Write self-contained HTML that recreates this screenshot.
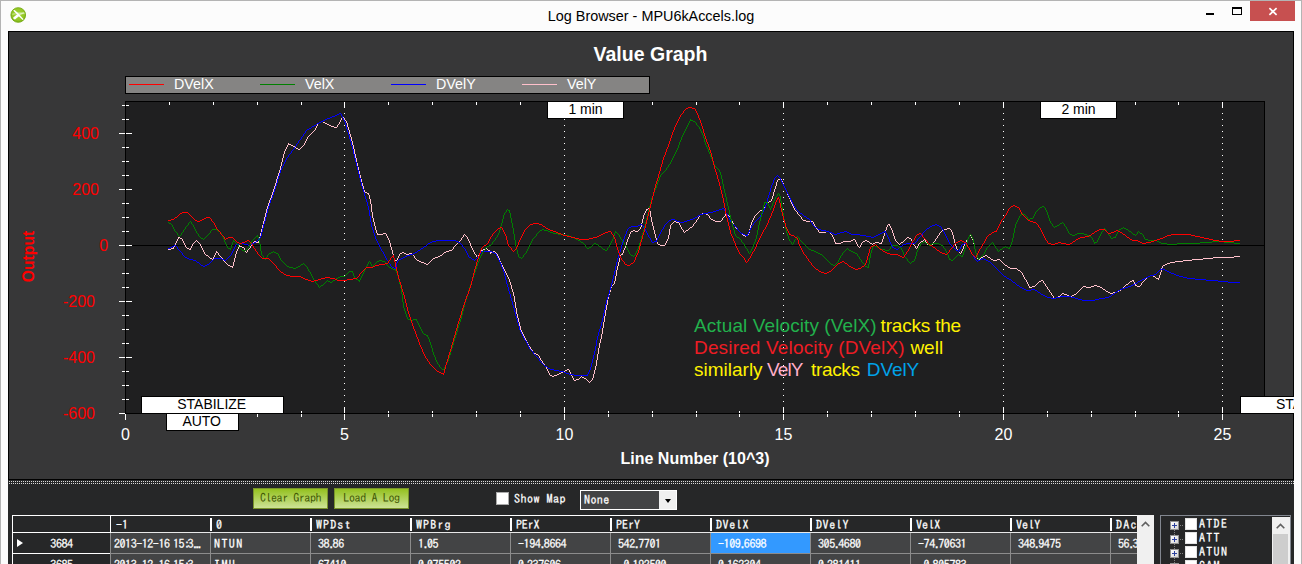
<!DOCTYPE html>
<html><head><meta charset="utf-8"><title>Log Browser - MPU6kAccels.log</title>
<style>
html,body{margin:0;padding:0}
body{width:1302px;height:564px;overflow:hidden;background:#fcfcfc;position:relative;font-family:"Liberation Sans",sans-serif}
.abs{position:absolute}
#win{position:absolute;left:0;top:0;width:1300px;height:564px;border:1px solid #b4b4b4;border-bottom:none}
#title{position:absolute;left:0;top:7px;width:1302px;text-align:center;font-size:14.4px;color:#000;line-height:18px}
#gp{position:absolute;left:8px;top:31px;width:1284px;height:447px;border:1px solid #000;background:#373738}
#svg{position:absolute;left:0;top:0}
#svg text{font-family:"Liberation Sans",sans-serif}
#bp{position:absolute;left:8px;top:480px;width:1286px;height:84px;background:#262728;overflow:hidden;font-family:"IPAGothic","Liberation Sans",sans-serif;font-size:12px;color:#fff;-webkit-text-stroke:0.25px #fff}
#bp i{font-style:normal;letter-spacing:-2.6px}
#bp u{text-decoration:none;letter-spacing:-3.7px}
.n{letter-spacing:-0.4px}
.dots{position:absolute;left:1px;width:1285px;height:1px;background:repeating-linear-gradient(90deg,#d9d9d9 0,#d9d9d9 1px,#262728 1px,#262728 2px)}
.btn{position:absolute;top:8px;height:19px;width:73px;border:1px solid #79942a;background:linear-gradient(#94c11f,#cde296);color:#405704;-webkit-text-stroke:0;text-align:center;line-height:17px;font-size:12px;white-space:nowrap}
#tbl{position:absolute;left:4px;top:35px;width:1141px;height:60px;overflow:hidden;background:#262728}
#tbl .top{position:absolute;left:0;top:0;width:1125px;height:1px;background:#fff}
#tbl .lft{position:absolute;left:0;top:0;width:1px;height:60px;background:#fff}
#grid{position:absolute;left:1px;top:1px;width:1124px;height:59px;overflow:hidden}
.hc{position:absolute;top:0;height:16px;width:95px;padding-left:5px;border-bottom:1px solid #e8e8e8;line-height:17px;white-space:nowrap}
.hc:before{content:"";position:absolute;left:-1px;top:2px;width:2px;height:13px;background:#fff}
.hc0:before{left:-1px;top:0;width:1px;height:17px}
.rh{position:absolute;left:0;width:97px;height:20px;box-shadow:1px 0 0 #8c8c8c;border-bottom:1px solid #fff;background:#262728;line-height:21px;text-align:center}
.tri{position:absolute;left:4px;top:6px;width:0;height:0;border:4.5px solid transparent;border-left:6px solid #fff;border-right:none}
.c{position:absolute;box-sizing:border-box;width:100px;height:21px;border-right:1px solid #8c8c8c;border-bottom:1px solid #8c8c8c;background:#434445;line-height:21px;white-space:nowrap;overflow:hidden}
.sel{background:#3399ff}
#vs{position:absolute;left:1129px;top:35px;width:17px;height:60px;background:#f0f0f0}
.chev{position:absolute;width:9px;height:6px}
#tv{position:absolute;left:1152px;top:35px;width:129px;height:60px;border:1px solid #828790;border-bottom:none;background:#262728;overflow:hidden}
#tvs{position:absolute;left:1264px;top:37px;width:18px;height:50px;background:#f0f0f0}
#tvs .th{position:absolute;left:1px;top:17px;width:15px;height:40px;background:#cdcdcd}
.pm{position:absolute;left:1162px;width:7px;height:7px;border:1px solid #919191;background:linear-gradient(135deg,#fff,#d6d6d6)}
.pm:before{content:"";position:absolute;left:1px;top:3px;width:5px;height:1px;background:#2a3f9e}
.pm:after{content:"";position:absolute;left:3px;top:1px;width:1px;height:5px;background:#2a3f9e}
.hd{position:absolute;left:1172px;width:4px;height:1px;background:repeating-linear-gradient(90deg,#808080 0,#808080 1px,transparent 1px,transparent 2px)}
.vd{position:absolute;left:1166px;width:1px;height:5px;background:repeating-linear-gradient(#808080 0,#808080 1px,transparent 1px,transparent 2px)}
.cb{position:absolute;left:1177px;width:10px;height:10px;border:1px solid #e3e3e3;background:#fff}
.tl{position:absolute;left:1191px;line-height:15px;letter-spacing:1.3px}
</style></head><body>
<div id="win"></div>
<svg class="abs" style="left:10px;top:7px" width="17" height="17" viewBox="0 0 17 17"><defs><radialGradient id="ig" cx="0.5" cy="0.45" r="0.55"><stop offset="0" stop-color="#a4d43a"/><stop offset="0.75" stop-color="#93c724"/><stop offset="1" stop-color="#74ab12"/></radialGradient></defs><circle cx="8.25" cy="8" r="7.35" fill="url(#ig)" stroke="#78ad16" stroke-width="0.9"/><path d="M2.3 6.6Q8 4.2 14.6 5.6L14.9 7.2Q8 6.6 2.1 8.2z" fill="#c3e486" opacity="0.75"/><path d="M3.2 3.4L4.6 2.9L8.6 6.6L10.2 8.6L13.6 12.2L12.6 13L9 9.6L7 7.6z" fill="#fff"/><path d="M3.2 10.6L7.2 7.2L9.6 8.8L5 12.6L3.6 12z" fill="#fff"/><path d="M8.6 6.8L13.8 5.2L14.4 6.2L9.6 8.6z" fill="#fff" opacity="0.55"/></svg>
<div id="title">Log Browser - MPU6kAccels.log</div>
<div class="abs" style="left:1206px;top:13px;width:8px;height:2px;background:#000"></div>
<div class="abs" style="left:1232px;top:7px;width:8px;height:5px;border:1px solid #000;border-top-width:2px"></div>
<div class="abs" style="left:1250px;top:1px;width:45px;height:20px;background:#c75050"></div>
<svg class="abs" style="left:1250px;top:1px" width="45" height="20"><path d="M19.4 7.2L26.6 13.8M26.6 7.2L19.4 13.8" stroke="#fff" stroke-width="1.7" fill="none"/></svg>
<div id="gp"></div>
<div id="bp">
 <div class="dots" style="top:1px"></div><div class="dots" style="top:3px"></div>
 <div class="btn" style="left:245px;letter-spacing:-0.45px">Clear Graph</div>
 <div class="btn" style="left:326px;letter-spacing:-0.35px">Load A Log</div>
 <div class="abs" style="left:488px;top:12px;width:11px;height:11px;background:#fff;border:1px solid #a9a9a9"></div>
 <div class="abs" style="left:506px;top:11px;line-height:14px;letter-spacing:0.5px">Show Map</div>
 <div class="abs" style="left:572px;top:10px;width:95px;height:18px;border:1px solid #fff;background:#434445"><span style="position:absolute;left:3px;top:1px;line-height:14px;letter-spacing:0.4px">None</span><div class="abs" style="right:0;top:0;width:17px;height:18px;background:#f0f0f0"></div><div class="abs" style="right:5px;top:8px;width:0;height:0;border:3.5px solid transparent;border-top:4px solid #000;border-bottom:none"></div></div>
 <div id="tbl">
  <div id="grid">
  <div class="rh" style="top:0;height:16px;border-right-color:#262728"></div>
  <div class="hc hc0" style="left:98px;letter-spacing:0px">-1</div><div class="hc" style="left:198px;letter-spacing:0px">0</div><div class="hc" style="left:298px;letter-spacing:1.1px">WPDst</div><div class="hc" style="left:398px;letter-spacing:1.1px">WPBrg</div><div class="hc" style="left:498px;letter-spacing:-0.2px">PErX</div><div class="hc" style="left:598px;letter-spacing:0.0px">PErY</div><div class="hc" style="left:698px;letter-spacing:0.6px">DVelX</div><div class="hc" style="left:798px;letter-spacing:0.6px">DVelY</div><div class="hc" style="left:898px;letter-spacing:0.1px">VelX</div><div class="hc" style="left:998px;letter-spacing:0.1px">VelY</div><div class="hc" style="left:1098px;letter-spacing:1.2px">DAcX</div>
  <div class="rh" style="top:17px"><b class="tri"></b><span class="n">3684</span></div><div class="c" style="left:98px;top:17px;padding-left:3px"><span class="n" style="letter-spacing:-0.45px">2013-12-16<i> </i>15<i>:</i>3<u>...</u></span></div><div class="c" style="left:198px;top:17px;padding-left:3px"><span style="letter-spacing:1.4px">NTUN</span></div><div class="c" style="left:298px;top:17px;padding-left:7px"><span class="n">38<i>.</i>86</span></div><div class="c" style="left:398px;top:17px;padding-left:7px"><span class="n">1<i>.</i>05</span></div><div class="c" style="left:498px;top:17px;padding-left:7px"><span class="n">-194<i>.</i>8664</span></div><div class="c" style="left:598px;top:17px;padding-left:7px"><span class="n">542<i>.</i>7701</span></div><div class="c sel" style="left:698px;top:17px;padding-left:7px"><span class="n">-109<i>.</i>6698</span></div><div class="c" style="left:798px;top:17px;padding-left:7px"><span class="n">305<i>.</i>4680</span></div><div class="c" style="left:898px;top:17px;padding-left:7px"><span class="n">-74<i>.</i>70631</span></div><div class="c" style="left:998px;top:17px;padding-left:7px"><span class="n">348<i>.</i>9475</span></div><div class="c" style="left:1098px;top:17px;padding-left:7px"><span class="n">56<i>.</i>37</span></div>
  <div class="rh" style="top:38px"><span class="n">3685</span></div><div class="c" style="left:98px;top:38px;padding-left:3px"><span class="n" style="letter-spacing:-0.45px">2013-12-16<i> </i>15<i>:</i>3<u>...</u></span></div><div class="c" style="left:198px;top:38px;padding-left:3px"><span style="letter-spacing:1.4px">IMU</span></div><div class="c" style="left:298px;top:38px;padding-left:7px"><span class="n">67410</span></div><div class="c" style="left:398px;top:38px;padding-left:7px"><span class="n">0<i>.</i>075502</span></div><div class="c" style="left:498px;top:38px;padding-left:7px"><span class="n">0<i>.</i>237606</span></div><div class="c" style="left:598px;top:38px;padding-left:7px"><span class="n">-0<i>.</i>192500</span></div><div class="c" style="left:698px;top:38px;padding-left:7px"><span class="n">0<i>.</i>162304</span></div><div class="c" style="left:798px;top:38px;padding-left:7px"><span class="n">0<i>.</i>281411</span></div><div class="c" style="left:898px;top:38px;padding-left:7px"><span class="n">-0<i>.</i>805783</span></div><div class="c" style="left:998px;top:38px;padding-left:7px"><span class="n"></span></div><div class="c" style="left:1098px;top:38px;padding-left:7px"><span class="n"></span></div>
  </div>
  <div class="top"></div><div class="lft"></div>
 </div>
 <div id="vs"><svg class="chev" style="left:4px;top:6px" viewBox="0 0 9 6"><path d="M0.7 5.3L4.5 1.5L8.3 5.3" fill="none" stroke="#606060" stroke-width="1.6"/></svg></div>
 <div id="tv"></div>
 <div class="pm" style="top:41px"></div><div class="hd" style="top:45px"></div><div class="vd" style="top:50px"></div><div class="cb" style="top:38px"></div><div class="tl" style="top:36px">ATDE</div><div class="pm" style="top:55px"></div><div class="hd" style="top:59px"></div><div class="vd" style="top:64px"></div><div class="cb" style="top:52px"></div><div class="tl" style="top:50px">ATT</div><div class="pm" style="top:69px"></div><div class="hd" style="top:73px"></div><div class="vd" style="top:78px"></div><div class="cb" style="top:66px"></div><div class="tl" style="top:64px">ATUN</div><div class="pm" style="top:83px"></div><div class="hd" style="top:87px"></div><div class="vd" style="top:92px"></div><div class="cb" style="top:80px"></div><div class="tl" style="top:78px">CAM</div>
 <div id="tvs"><div class="th"></div><svg class="chev" style="left:4px;top:6px" viewBox="0 0 9 6"><path d="M0.7 5.3L4.5 1.5L8.3 5.3" fill="none" stroke="#606060" stroke-width="1.6"/></svg></div>
</div>
<svg id="svg" width="1294" height="564" viewBox="0 0 1294 564">
<rect x="125.5" y="101.5" width="1139" height="312" fill="#1f1f20" stroke="none"/>
<line x1="344.5" y1="101" x2="344.5" y2="413" stroke="#fff" stroke-width="1" stroke-dasharray="1 5"/>
<line x1="564.5" y1="101" x2="564.5" y2="413" stroke="#fff" stroke-width="1" stroke-dasharray="1 5"/>
<line x1="783.5" y1="101" x2="783.5" y2="413" stroke="#fff" stroke-width="1" stroke-dasharray="1 5"/>
<line x1="1003.5" y1="101" x2="1003.5" y2="413" stroke="#fff" stroke-width="1" stroke-dasharray="1 5"/>
<line x1="1222.5" y1="101" x2="1222.5" y2="413" stroke="#fff" stroke-width="1" stroke-dasharray="1 5"/>
<line x1="126" y1="245.5" x2="1264" y2="245.5" stroke="#000" stroke-width="1"/>
<g fill="none" stroke-width="1" shape-rendering="crispEdges">
<path stroke="#ffc0cb" d="M173.5 247v2M174.5 245v2M175.5 243v2M176.5 241v2M177.5 239v2M178.5 237v2M182.5 239v2M183.5 241v2M184.5 243v2M185.5 245v2M190.5 248v2M191.5 246v2M192.5 244v2M200.5 244v2M201.5 246v2M202.5 248v2M203.5 250v2M204.5 252v2M213.5 257v2M214.5 255v2M215.5 253v2M216.5 251v2M218.5 253v2M222.5 258v2M232.5 266v2M233.5 262v4M234.5 258v4M235.5 254v4M236.5 251v3M237.5 249v2M238.5 247v2M239.5 245v2M244.5 248v2M245.5 250v2M247.5 250v2M250.5 246v2M253.5 242v2M258.5 241v2M259.5 237v4M260.5 233v4M261.5 229v4M262.5 225v4M263.5 221v4M264.5 217v4M265.5 213v4M266.5 209v4M267.5 206v3M268.5 203v3M269.5 200v3M270.5 198v2M271.5 195v3M272.5 192v3M273.5 189v3M274.5 186v3M275.5 183v3M276.5 179v4M277.5 176v3M278.5 173v3M279.5 170v3M280.5 166v4M281.5 162v4M282.5 158v4M283.5 154v4M284.5 151v3M285.5 149v2M286.5 147v2M287.5 145v2M288.5 143v2M304.5 143v2M305.5 141v2M306.5 139v2M307.5 137v2M315.5 128v2M316.5 126v2M317.5 124v2M337.5 125v2M339.5 122v2M340.5 120v2M341.5 118v2M342.5 116v2M344.5 118v2M346.5 121v2M347.5 123v4M348.5 127v3M349.5 130v4M350.5 134v3M351.5 137v4M352.5 141v4M353.5 145v4M354.5 149v5M355.5 154v4M356.5 158v5M357.5 163v4M358.5 167v4M359.5 171v4M360.5 175v4M361.5 179v4M362.5 183v3M363.5 186v4M364.5 190v2M368.5 193v2M369.5 195v4M370.5 199v5M371.5 204v8M372.5 212v6M373.5 218v4M374.5 222v4M375.5 226v4M376.5 230v3M377.5 233v2M386.5 234v2M387.5 236v2M388.5 238v2M389.5 240v3M390.5 243v4M391.5 247v3M392.5 250v4M393.5 254v4M394.5 258v2M397.5 258v2M398.5 256v2M399.5 254v2M414.5 256v2M453.5 247v2M461.5 238v2M463.5 235v2M467.5 237v2M468.5 239v2M469.5 241v2M470.5 243v3M471.5 246v2M472.5 248v2M473.5 250v2M474.5 252v2M476.5 255v2M478.5 255v2M479.5 253v2M480.5 251v2M490.5 251v3M497.5 254v2M498.5 256v2M499.5 258v3M500.5 261v2M501.5 263v2M502.5 265v2M503.5 267v2M504.5 269v2M505.5 271v2M506.5 273v2M507.5 275v2M508.5 277v2M509.5 279v3M510.5 282v3M511.5 285v4M512.5 289v3M513.5 292v4M514.5 296v6M515.5 302v6M516.5 308v6M517.5 314v4M518.5 318v4M519.5 322v4M520.5 326v4M521.5 330v2M522.5 332v2M523.5 334v2M524.5 336v2M525.5 338v2M526.5 340v2M527.5 342v2M528.5 344v2M530.5 347v2M532.5 350v2M539.5 356v2M540.5 358v2M542.5 361v2M544.5 364v2M546.5 367v2M547.5 369v2M548.5 371v2M549.5 373v2M569.5 370v2M570.5 372v2M571.5 374v2M572.5 376v2M573.5 378v2M592.5 378v2M593.5 374v4M594.5 370v4M595.5 366v4M596.5 360v6M597.5 354v6M598.5 348v6M599.5 343v5M600.5 339v4M601.5 334v5M602.5 328v6M603.5 322v6M604.5 316v6M605.5 310v6M606.5 305v5M607.5 299v6M608.5 295v4M609.5 292v3M610.5 288v4M611.5 286v2M614.5 281v3M615.5 276v5M616.5 270v6M617.5 266v4M618.5 262v4M619.5 258v4M620.5 255v3M622.5 253v2M623.5 250v3M624.5 248v2M625.5 245v3M626.5 242v3M627.5 239v3M628.5 237v2M629.5 234v3M630.5 232v2M640.5 227v2M641.5 223v4M642.5 219v4M643.5 215v4M644.5 213v2M645.5 211v2M646.5 209v2M649.5 208v3M650.5 211v6M651.5 217v5M652.5 222v4M653.5 226v4M654.5 230v4M655.5 234v4M656.5 238v4M657.5 242v2M665.5 243v2M666.5 241v2M667.5 239v2M668.5 235v4M669.5 229v6M670.5 225v4M679.5 223v2M680.5 225v2M681.5 227v2M683.5 230v2M693.5 224v2M696.5 220v2M698.5 217v2M699.5 215v2M709.5 216v2M722.5 218v2M725.5 214v2M730.5 217v2M731.5 219v2M732.5 221v2M733.5 223v2M735.5 226v2M748.5 233v2M749.5 229v4M750.5 225v4M751.5 222v3M752.5 220v2M753.5 218v2M754.5 216v2M765.5 205v2M771.5 199v2M772.5 196v3M773.5 192v4M774.5 189v3M775.5 186v3M776.5 182v4M777.5 180v2M781.5 179v2M782.5 181v2M783.5 183v3M784.5 186v2M785.5 188v2M786.5 190v2M787.5 192v3M788.5 195v2M789.5 197v2M790.5 199v3M791.5 202v2M792.5 204v2M793.5 206v2M794.5 208v2M797.5 212v2M801.5 217v2M813.5 222v2M814.5 224v2M815.5 226v2M818.5 230v2M832.5 235v2M833.5 237v2M834.5 239v3M835.5 242v2M855.5 240v2M856.5 242v2M857.5 244v2M860.5 245v2M861.5 243v2M881.5 242v2M882.5 239v3M883.5 236v3M884.5 233v3M885.5 230v3M886.5 227v3M887.5 225v2M889.5 224v2M890.5 226v2M891.5 228v2M892.5 230v3M893.5 233v3M894.5 236v3M895.5 239v2M911.5 239v2M912.5 241v2M913.5 243v2M915.5 246v2M917.5 246v2M918.5 244v2M925.5 240v2M926.5 242v2M933.5 242v2M935.5 239v2M937.5 236v2M939.5 233v2M951.5 230v2M952.5 232v3M953.5 235v4M954.5 239v4M955.5 243v3M956.5 246v3M957.5 249v2M961.5 251v2M962.5 249v2M963.5 246v3M964.5 244v2M965.5 242v2M966.5 240v2M968.5 237v2M971.5 236v2M972.5 238v2M973.5 240v4M974.5 244v5M975.5 249v4M976.5 253v3M977.5 256v3M978.5 259v2M1022.5 273v2M1023.5 275v2M1024.5 277v2M1026.5 280v2M1027.5 282v2M1028.5 284v2M1029.5 286v2M1043.5 281v2M1045.5 284v2M1047.5 287v2M1049.5 290v2M1051.5 293v2M1053.5 296v2M1133.5 280v2M1134.5 282v2M1135.5 284v2M1141.5 283v2M1158.5 278v2M1159.5 275v3M1160.5 272v3M1161.5 268v4M1162.5 266v2M343 117.5h1M345 120.5h1M321 121.5h2M319 122.5h2M323 122.5h2M318 123.5h1M325 123.5h2M327 124.5h2M338 124.5h1M329 125.5h2M331 126.5h3M334 127.5h3M314 130.5h1M313 131.5h1M312 132.5h1M311 133.5h1M310 134.5h1M309 135.5h1M308 136.5h1M289 144.5h2M291 145.5h2M303 145.5h1M293 146.5h2M302 146.5h1M295 147.5h1M301 147.5h1M296 148.5h2M300 148.5h1M298 149.5h2M780 178.5h1M778 179.5h2M365 192.5h2M367 193.5h1M769 201.5h2M768 202.5h1M767 203.5h1M766 204.5h1M764 207.5h1M648 208.5h1M763 208.5h1M647 209.5h1M762 209.5h1M760 210.5h2M795 210.5h1M759 211.5h1M796 211.5h1M758 212.5h1M702 213.5h4M726 213.5h1M757 213.5h1M700 214.5h2M706 214.5h2M727 214.5h1M756 214.5h1M798 214.5h1M708 215.5h1M728 215.5h1M755 215.5h1M799 215.5h1M724 216.5h1M729 216.5h1M800 216.5h1M723 217.5h1M710 218.5h1M697 219.5h1M711 219.5h2M802 219.5h1M713 220.5h2M721 220.5h1M803 220.5h3M674 221.5h2M715 221.5h6M806 221.5h7M673 222.5h1M676 222.5h3M695 222.5h1M672 223.5h1M694 223.5h1M671 224.5h1M888 224.5h1M734 225.5h1M692 226.5h1M690 227.5h2M689 228.5h1M736 228.5h1M816 228.5h1M947 228.5h3M639 229.5h1M682 229.5h1M688 229.5h1M737 229.5h1M817 229.5h1M944 229.5h3M950 229.5h1M633 230.5h2M638 230.5h1M686 230.5h2M738 230.5h1M942 230.5h2M631 231.5h2M635 231.5h3M685 231.5h1M739 231.5h1M826 231.5h3M941 231.5h1M684 232.5h1M740 232.5h1M819 232.5h7M829 232.5h1M940 232.5h1M383 233.5h3M741 233.5h1M830 233.5h1M378 234.5h5M464 234.5h1M742 234.5h1M831 234.5h1M465 235.5h1M743 235.5h2M746 235.5h2M938 235.5h1M970 235.5h1M466 236.5h1M745 236.5h1M969 236.5h1M179 237.5h1M462 237.5h1M907 237.5h2M180 238.5h2M906 238.5h1M909 238.5h2M936 238.5h1M853 239.5h2M905 239.5h1M924 239.5h1M967 239.5h1M196 240.5h1M460 240.5h1M851 240.5h2M865 240.5h2M904 240.5h1M923 240.5h1M195 241.5h1M197 241.5h1M254 241.5h2M459 241.5h1M843 241.5h8M863 241.5h2M867 241.5h2M896 241.5h1M903 241.5h1M921 241.5h2M934 241.5h1M194 242.5h1M198 242.5h1M256 242.5h2M458 242.5h1M841 242.5h2M862 242.5h1M869 242.5h1M875 242.5h4M897 242.5h1M901 242.5h2M920 242.5h1M193 243.5h1M199 243.5h1M457 243.5h1M836 243.5h5M870 243.5h2M873 243.5h2M879 243.5h2M898 243.5h1M900 243.5h1M919 243.5h1M252 244.5h1M456 244.5h1M658 244.5h2M872 244.5h1M899 244.5h1M927 244.5h6M251 245.5h1M455 245.5h1M660 245.5h5M914 245.5h1M240 246.5h2M454 246.5h1M858 246.5h1M186 247.5h1M242 247.5h2M859 247.5h1M171 248.5h2M187 248.5h2M249 248.5h1M485 248.5h2M916 248.5h1M168 249.5h3M189 249.5h1M248 249.5h1M452 249.5h1M483 249.5h2M487 249.5h1M449 250.5h3M481 250.5h2M488 250.5h2M446 251.5h3M493 251.5h2M958 251.5h1M217 252.5h1M246 252.5h1M402 252.5h2M444 252.5h2M491 252.5h2M495 252.5h1M959 252.5h1M400 253.5h2M404 253.5h2M409 253.5h3M443 253.5h1M496 253.5h1M960 253.5h1M205 254.5h1M406 254.5h3M412 254.5h1M442 254.5h1M475 254.5h1M621 254.5h1M206 255.5h2M219 255.5h1M413 255.5h1M440 255.5h2M985 255.5h2M208 256.5h1M220 256.5h1M438 256.5h2M983 256.5h2M987 256.5h1M1234 256.5h6M209 257.5h1M221 257.5h1M435 257.5h3M477 257.5h1M981 257.5h2M988 257.5h2M1213 257.5h21M210 258.5h2M415 258.5h1M433 258.5h2M980 258.5h1M990 258.5h1M1203 258.5h10M212 259.5h1M416 259.5h1M432 259.5h1M979 259.5h1M991 259.5h2M997 259.5h3M1192 259.5h11M223 260.5h1M395 260.5h2M417 260.5h2M431 260.5h1M993 260.5h4M1000 260.5h1M1183 260.5h9M224 261.5h1M419 261.5h2M430 261.5h1M1001 261.5h1M1175 261.5h8M225 262.5h1M421 262.5h3M429 262.5h1M1002 262.5h1M1170 262.5h5M226 263.5h1M424 263.5h2M428 263.5h1M1003 263.5h1M1167 263.5h3M227 264.5h1M426 264.5h2M1004 264.5h1M1165 264.5h2M228 265.5h2M1005 265.5h2M1163 265.5h2M230 266.5h2M1007 266.5h1M1008 267.5h2M1010 268.5h7M1017 269.5h1M1018 270.5h2M1020 271.5h1M1021 272.5h1M1150 275.5h3M1148 276.5h2M1153 276.5h2M1147 277.5h1M1155 277.5h1M1146 278.5h1M1156 278.5h2M1025 279.5h1M1145 279.5h1M1041 280.5h2M1132 280.5h1M1144 280.5h1M1039 281.5h2M1130 281.5h2M1143 281.5h1M1038 282.5h1M1129 282.5h1M1142 282.5h1M1037 283.5h1M1044 283.5h1M1128 283.5h1M613 284.5h1M1036 284.5h1M1126 284.5h2M612 285.5h1M1035 285.5h1M1094 285.5h3M1125 285.5h1M1136 285.5h1M1140 285.5h1M1032 286.5h3M1046 286.5h1M1083 286.5h3M1091 286.5h3M1097 286.5h3M1124 286.5h1M1137 286.5h3M1030 287.5h2M1082 287.5h1M1086 287.5h5M1100 287.5h2M1123 287.5h1M1081 288.5h1M1102 288.5h1M1122 288.5h1M1048 289.5h1M1080 289.5h1M1103 289.5h2M1121 289.5h1M1079 290.5h1M1105 290.5h1M1119 290.5h2M1078 291.5h1M1106 291.5h2M1117 291.5h2M1050 292.5h1M1077 292.5h1M1108 292.5h2M1113 292.5h4M1062 293.5h2M1076 293.5h1M1110 293.5h3M1061 294.5h1M1064 294.5h3M1074 294.5h2M1052 295.5h1M1060 295.5h1M1067 295.5h2M1072 295.5h2M1058 296.5h2M1069 296.5h3M1056 297.5h2M1054 298.5h2M529 346.5h1M531 349.5h1M533 352.5h1M534 353.5h2M536 354.5h2M538 355.5h1M541 360.5h1M543 363.5h1M545 366.5h1M567 369.5h2M565 370.5h2M563 371.5h2M561 372.5h2M559 373.5h2M557 374.5h2M550 375.5h2M554 375.5h3M552 376.5h2M581 376.5h1M580 377.5h1M582 377.5h2M579 378.5h1M584 378.5h2M576 379.5h3M586 379.5h1M574 380.5h2M587 380.5h1M591 380.5h1M588 381.5h1M590 381.5h1M589 382.5h1"/>
<path stroke="#0000ff" d="M177.5 247v2M182.5 253v2M231.5 253v2M232.5 251v2M233.5 249v2M234.5 247v2M235.5 245v2M260.5 236v2M261.5 232v4M262.5 228v4M263.5 224v4M264.5 221v3M265.5 217v4M266.5 213v4M267.5 209v4M268.5 206v3M269.5 203v3M270.5 200v3M271.5 198v2M272.5 195v3M273.5 192v3M274.5 189v3M275.5 186v3M276.5 183v3M277.5 179v4M278.5 176v3M279.5 173v3M280.5 170v3M281.5 168v2M282.5 166v2M283.5 164v2M284.5 162v2M285.5 160v2M286.5 158v2M288.5 155v2M291.5 151v2M294.5 147v2M296.5 144v2M298.5 141v2M301.5 137v2M303.5 134v2M305.5 131v2M341.5 114v2M342.5 116v2M343.5 118v2M344.5 120v2M345.5 122v3M346.5 125v4M347.5 129v3M348.5 132v3M349.5 135v4M350.5 139v3M351.5 142v4M352.5 146v4M353.5 150v4M354.5 154v4M355.5 158v4M356.5 162v4M357.5 166v4M358.5 170v4M359.5 174v4M360.5 178v4M361.5 182v4M362.5 186v3M363.5 189v3M364.5 192v4M365.5 196v3M366.5 199v3M367.5 202v4M368.5 206v4M369.5 210v6M370.5 216v6M371.5 222v5M372.5 227v3M373.5 230v3M374.5 233v3M375.5 236v3M376.5 239v2M377.5 241v2M378.5 243v2M379.5 245v2M380.5 247v2M381.5 249v2M383.5 252v2M384.5 254v2M385.5 256v2M386.5 258v2M388.5 261v2M390.5 264v2M395.5 267v2M396.5 263v4M397.5 261v2M462.5 245v2M465.5 249v2M466.5 251v2M467.5 253v2M468.5 255v2M479.5 254v2M480.5 252v2M496.5 254v2M497.5 256v2M498.5 258v2M499.5 260v2M500.5 262v2M501.5 264v3M502.5 267v2M503.5 269v3M504.5 272v4M505.5 276v4M506.5 280v4M507.5 284v3M508.5 287v4M509.5 291v3M510.5 294v4M511.5 298v3M512.5 301v4M513.5 305v3M514.5 308v4M515.5 312v4M516.5 316v3M517.5 319v4M518.5 323v3M519.5 326v4M520.5 330v2M521.5 332v2M522.5 334v2M523.5 336v2M524.5 338v2M526.5 341v2M527.5 343v2M528.5 345v2M529.5 347v2M533.5 352v2M539.5 359v2M587.5 374v2M588.5 372v2M589.5 370v2M590.5 367v3M591.5 363v4M592.5 359v4M593.5 355v4M594.5 351v4M595.5 346v5M596.5 340v6M597.5 336v4M598.5 332v4M599.5 329v3M600.5 326v3M601.5 322v4M602.5 318v4M603.5 313v5M604.5 309v4M605.5 304v5M606.5 300v4M607.5 297v3M608.5 294v3M609.5 290v4M610.5 287v3M611.5 283v4M612.5 279v4M613.5 275v4M614.5 271v4M615.5 266v5M616.5 262v4M617.5 258v4M618.5 255v3M619.5 252v3M620.5 249v3M621.5 245v4M622.5 242v3M623.5 239v3M624.5 236v3M625.5 234v2M626.5 231v3M627.5 229v2M643.5 226v2M645.5 229v2M646.5 231v2M647.5 233v2M648.5 235v2M650.5 238v2M651.5 240v2M656.5 240v2M657.5 238v2M658.5 236v2M659.5 234v2M660.5 232v2M661.5 230v2M663.5 227v2M664.5 225v2M724.5 209v2M725.5 211v2M727.5 214v2M728.5 216v2M729.5 218v2M730.5 220v2M737.5 228v2M747.5 234v2M748.5 232v2M749.5 230v2M750.5 228v2M751.5 226v2M753.5 223v2M760.5 215v2M762.5 212v2M763.5 210v2M764.5 208v2M765.5 205v3M766.5 202v3M767.5 198v4M768.5 195v3M769.5 192v3M770.5 188v4M771.5 185v3M772.5 183v2M773.5 180v3M774.5 178v2M780.5 178v2M781.5 180v2M782.5 182v2M783.5 184v2M784.5 186v2M785.5 188v2M786.5 190v2M787.5 192v2M788.5 194v2M789.5 196v2M790.5 198v2M791.5 200v2M792.5 202v2M793.5 204v2M795.5 207v2M810.5 220v2M812.5 223v2M885.5 231v2M886.5 233v2M887.5 235v2M888.5 237v2M889.5 239v3M890.5 242v2M891.5 244v2M892.5 246v2M917.5 239v2M922.5 233v2M941.5 227v2M943.5 230v2M944.5 232v2M945.5 234v2M946.5 236v2M947.5 238v2M948.5 240v2M949.5 242v2M959.5 249v2M960.5 247v2M961.5 245v2M967.5 245v2M969.5 248v2M970.5 250v2M971.5 252v2M973.5 255v2M974.5 257v2M339 113.5h2M337 114.5h2M335 115.5h2M332 116.5h3M330 117.5h2M327 118.5h3M325 119.5h2M323 120.5h2M321 121.5h2M319 122.5h2M317 123.5h2M316 124.5h1M314 125.5h2M312 126.5h2M311 127.5h1M309 128.5h2M307 129.5h2M306 130.5h1M304 133.5h1M302 136.5h1M300 139.5h1M299 140.5h1M297 143.5h1M295 146.5h1M293 149.5h1M292 150.5h1M290 153.5h1M289 154.5h1M287 157.5h1M777 175.5h1M776 176.5h1M778 176.5h1M775 177.5h1M779 177.5h1M794 206.5h1M722 208.5h2M719 209.5h3M796 209.5h1M716 210.5h3M797 210.5h1M713 211.5h3M798 211.5h1M708 212.5h5M799 212.5h1M703 213.5h5M726 213.5h1M800 213.5h2M700 214.5h3M761 214.5h1M802 214.5h1M698 215.5h2M803 215.5h1M697 216.5h1M804 216.5h2M695 217.5h2M759 217.5h1M806 217.5h1M693 218.5h2M758 218.5h1M807 218.5h2M671 219.5h4M690 219.5h3M757 219.5h1M809 219.5h1M669 220.5h2M675 220.5h2M687 220.5h3M756 220.5h1M668 221.5h1M677 221.5h3M684 221.5h3M755 221.5h1M667 222.5h1M680 222.5h4M731 222.5h1M754 222.5h1M811 222.5h1M666 223.5h1M732 223.5h1M640 224.5h2M665 224.5h1M733 224.5h1M935 224.5h2M638 225.5h2M642 225.5h1M734 225.5h1M752 225.5h1M813 225.5h1M932 225.5h3M937 225.5h2M631 226.5h7M735 226.5h1M814 226.5h1M930 226.5h2M939 226.5h2M629 227.5h2M736 227.5h1M815 227.5h2M929 227.5h1M628 228.5h1M644 228.5h1M817 228.5h1M927 228.5h2M662 229.5h1M818 229.5h3M926 229.5h1M942 229.5h1M738 230.5h1M821 230.5h5M925 230.5h1M739 231.5h1M826 231.5h3M844 231.5h3M884 231.5h1M924 231.5h1M740 232.5h1M829 232.5h3M840 232.5h4M847 232.5h2M882 232.5h2M923 232.5h1M741 233.5h2M832 233.5h2M837 233.5h3M849 233.5h2M880 233.5h2M743 234.5h2M834 234.5h3M851 234.5h9M878 234.5h2M745 235.5h2M860 235.5h6M876 235.5h2M921 235.5h1M866 236.5h5M874 236.5h2M920 236.5h1M649 237.5h1M871 237.5h3M919 237.5h1M259 238.5h1M918 238.5h1M258 239.5h1M257 240.5h1M436 240.5h20M256 241.5h1M432 241.5h4M456 241.5h2M654 241.5h2M916 241.5h1M254 242.5h2M430 242.5h2M458 242.5h2M652 242.5h2M915 242.5h1M239 243.5h5M252 243.5h2M428 243.5h2M460 243.5h1M906 243.5h9M964 243.5h2M236 244.5h3M244 244.5h4M250 244.5h2M427 244.5h1M461 244.5h1M903 244.5h3M950 244.5h1M962 244.5h2M966 244.5h1M174 245.5h2M248 245.5h2M426 245.5h1M902 245.5h1M951 245.5h1M172 246.5h2M176 246.5h1M424 246.5h2M900 246.5h2M952 246.5h1M170 247.5h2M423 247.5h1M463 247.5h1M893 247.5h1M899 247.5h1M953 247.5h1M968 247.5h1M168 248.5h2M421 248.5h2M464 248.5h1M894 248.5h2M898 248.5h1M954 248.5h1M178 249.5h1M420 249.5h1M896 249.5h2M955 249.5h1M179 250.5h1M418 250.5h2M956 250.5h2M180 251.5h1M382 251.5h1M417 251.5h1M481 251.5h11M958 251.5h1M181 252.5h1M415 252.5h2M492 252.5h2M413 253.5h2M494 253.5h2M410 254.5h3M972 254.5h1M183 255.5h1M230 255.5h1M407 255.5h3M184 256.5h1M229 256.5h1M405 256.5h2M478 256.5h1M185 257.5h2M228 257.5h1M403 257.5h2M469 257.5h2M477 257.5h1M187 258.5h2M214 258.5h8M227 258.5h1M401 258.5h2M471 258.5h1M476 258.5h1M982 258.5h2M189 259.5h4M213 259.5h1M222 259.5h2M226 259.5h1M399 259.5h2M472 259.5h2M475 259.5h1M975 259.5h1M980 259.5h2M984 259.5h2M193 260.5h3M212 260.5h1M224 260.5h2M387 260.5h1M398 260.5h1M474 260.5h1M976 260.5h1M978 260.5h2M986 260.5h2M196 261.5h1M211 261.5h1M977 261.5h1M988 261.5h2M197 262.5h2M210 262.5h1M990 262.5h1M199 263.5h1M209 263.5h1M389 263.5h1M991 263.5h1M200 264.5h1M207 264.5h2M992 264.5h1M201 265.5h2M205 265.5h2M993 265.5h1M203 266.5h2M391 266.5h1M994 266.5h1M392 267.5h2M995 267.5h1M394 268.5h1M996 268.5h1M1162 268.5h1M997 269.5h1M1160 269.5h2M1163 269.5h2M998 270.5h1M1159 270.5h1M1165 270.5h2M999 271.5h1M1158 271.5h1M1167 271.5h2M1000 272.5h1M1157 272.5h1M1169 272.5h2M1001 273.5h1M1156 273.5h1M1171 273.5h3M1002 274.5h1M1154 274.5h2M1174 274.5h2M1003 275.5h1M1150 275.5h4M1176 275.5h3M1004 276.5h2M1148 276.5h2M1179 276.5h4M1006 277.5h1M1146 277.5h2M1183 277.5h4M1007 278.5h2M1144 278.5h2M1187 278.5h8M1009 279.5h2M1142 279.5h2M1195 279.5h11M1011 280.5h1M1140 280.5h2M1206 280.5h12M1012 281.5h1M1138 281.5h2M1218 281.5h10M1013 282.5h2M1137 282.5h1M1228 282.5h12M1015 283.5h1M1135 283.5h2M1016 284.5h1M1133 284.5h2M1017 285.5h2M1131 285.5h2M1019 286.5h1M1128 286.5h3M1020 287.5h2M1125 287.5h3M1022 288.5h2M1122 288.5h3M1024 289.5h2M1031 289.5h4M1120 289.5h2M1026 290.5h5M1035 290.5h2M1118 290.5h2M1037 291.5h1M1117 291.5h1M1038 292.5h2M1115 292.5h2M1040 293.5h1M1114 293.5h1M1041 294.5h2M1112 294.5h2M1043 295.5h2M1111 295.5h1M1045 296.5h2M1060 296.5h11M1109 296.5h2M1047 297.5h4M1056 297.5h4M1071 297.5h4M1105 297.5h4M1051 298.5h5M1075 298.5h3M1099 298.5h6M1078 299.5h4M1095 299.5h4M1082 300.5h13M525 340.5h1M530 349.5h1M531 350.5h1M532 351.5h1M534 354.5h1M535 355.5h1M536 356.5h1M537 357.5h1M538 358.5h1M540 361.5h1M541 362.5h1M542 363.5h1M543 364.5h1M544 365.5h1M545 366.5h2M547 367.5h1M548 368.5h2M550 369.5h4M554 370.5h5M559 371.5h5M564 372.5h2M566 373.5h3M569 374.5h5M574 375.5h13"/>
<path stroke="#008000" d="M172.5 225v2M173.5 227v2M174.5 229v2M177.5 233v2M181.5 233v2M183.5 230v2M185.5 227v2M188.5 223v2M191.5 222v2M193.5 225v2M194.5 227v2M195.5 229v2M196.5 231v2M198.5 234v2M210.5 231v2M221.5 233v2M222.5 235v2M223.5 237v2M224.5 239v3M225.5 242v2M226.5 244v2M227.5 246v2M230.5 248v2M231.5 245v3M232.5 242v3M233.5 240v2M238.5 245v2M249.5 245v2M250.5 243v2M251.5 241v2M257.5 235v2M258.5 237v2M259.5 239v5M260.5 244v7M261.5 251v4M263.5 256v2M266.5 257v2M267.5 255v2M278.5 254v2M279.5 256v2M280.5 258v2M307.5 267v2M308.5 269v2M310.5 272v2M311.5 274v2M312.5 276v2M313.5 278v2M315.5 281v2M318.5 285v2M352.5 271v2M353.5 273v3M354.5 276v2M359.5 280v2M360.5 278v2M361.5 276v2M362.5 274v2M363.5 272v2M364.5 270v2M365.5 268v2M366.5 266v2M367.5 264v2M368.5 262v2M370.5 262v2M371.5 264v2M386.5 263v2M395.5 269v2M396.5 271v2M397.5 273v3M398.5 276v4M399.5 280v4M400.5 284v4M401.5 288v6M402.5 294v8M403.5 302v6M404.5 308v3M405.5 311v3M406.5 314v3M407.5 317v2M416.5 319v2M417.5 321v2M418.5 323v2M419.5 325v2M420.5 327v2M421.5 329v2M422.5 331v2M427.5 335v2M428.5 337v2M429.5 339v3M430.5 342v3M431.5 345v3M432.5 348v4M433.5 352v3M434.5 355v2M435.5 357v3M436.5 360v2M437.5 362v2M439.5 365v2M444.5 367v2M445.5 365v2M446.5 363v2M447.5 361v2M448.5 358v3M449.5 355v3M450.5 351v4M451.5 348v3M452.5 345v3M453.5 341v4M454.5 338v3M455.5 335v3M456.5 332v3M457.5 328v4M458.5 325v3M459.5 322v3M460.5 319v3M461.5 315v4M462.5 311v4M463.5 307v4M464.5 303v4M465.5 300v3M466.5 297v3M467.5 294v3M468.5 290v4M469.5 287v3M470.5 284v3M471.5 281v3M472.5 278v3M473.5 275v3M474.5 272v3M475.5 269v3M476.5 266v3M477.5 263v3M478.5 261v2M479.5 258v3M480.5 256v2M481.5 254v2M482.5 252v2M485.5 248v2M492.5 242v2M495.5 238v2M497.5 235v2M498.5 233v2M499.5 230v3M500.5 226v4M501.5 223v3M502.5 219v4M503.5 215v4M504.5 213v2M506.5 210v2M509.5 210v3M510.5 213v5M511.5 218v5M512.5 223v5M513.5 228v6M514.5 234v6M515.5 240v6M516.5 246v4M517.5 250v4M518.5 254v3M523.5 255v2M526.5 251v2M527.5 249v2M528.5 247v2M529.5 245v2M530.5 243v2M531.5 241v2M532.5 239v2M536.5 234v2M585.5 245v2M607.5 248v2M609.5 245v2M610.5 243v2M611.5 241v2M612.5 239v2M613.5 236v3M614.5 233v3M615.5 231v2M619.5 235v2M620.5 237v2M622.5 240v2M624.5 243v2M626.5 246v2M627.5 248v2M628.5 250v2M629.5 252v2M635.5 253v2M636.5 251v2M637.5 249v2M638.5 246v3M639.5 243v3M640.5 240v3M641.5 236v4M642.5 233v3M643.5 230v3M644.5 226v4M645.5 222v4M646.5 218v4M647.5 214v4M648.5 210v4M649.5 206v4M650.5 202v4M651.5 198v4M652.5 196v2M653.5 193v3M654.5 190v3M655.5 188v2M656.5 185v3M657.5 182v3M658.5 180v2M659.5 177v3M660.5 175v2M666.5 168v2M668.5 165v2M670.5 162v2M671.5 160v2M672.5 158v2M673.5 156v2M674.5 154v2M675.5 152v2M676.5 150v2M677.5 148v2M678.5 145v3M679.5 142v3M680.5 140v2M681.5 137v3M682.5 135v2M683.5 133v2M684.5 131v2M685.5 129v2M686.5 127v2M687.5 125v2M688.5 123v2M689.5 121v2M690.5 119v2M696.5 123v2M699.5 127v2M700.5 129v2M701.5 131v2M702.5 133v2M703.5 135v3M704.5 138v4M705.5 142v3M706.5 145v2M707.5 147v2M708.5 149v3M709.5 152v2M710.5 154v3M711.5 157v2M712.5 159v3M713.5 162v2M714.5 164v2M719.5 170v2M720.5 172v3M721.5 175v4M722.5 179v5M723.5 184v5M724.5 189v4M725.5 193v4M726.5 197v5M727.5 202v4M728.5 206v4M729.5 210v5M730.5 215v4M731.5 219v4M732.5 223v4M733.5 227v3M734.5 230v4M735.5 234v2M741.5 240v2M744.5 244v2M745.5 246v2M747.5 249v2M748.5 251v2M750.5 251v2M751.5 249v2M752.5 247v2M753.5 244v3M754.5 242v2M755.5 239v3M756.5 235v4M757.5 230v5M758.5 225v5M759.5 221v4M760.5 217v4M761.5 213v4M762.5 209v4M763.5 205v4M764.5 202v3M767.5 202v2M768.5 204v2M769.5 206v2M770.5 208v2M771.5 206v2M772.5 203v3M773.5 201v2M774.5 199v2M775.5 197v2M777.5 194v2M779.5 194v2M780.5 196v5M781.5 201v6M782.5 207v6M783.5 213v6M784.5 219v5M785.5 224v5M786.5 229v4M787.5 233v3M788.5 236v3M789.5 239v2M791.5 242v2M793.5 242v2M794.5 240v2M796.5 237v2M799.5 238v2M838.5 260v2M839.5 258v2M840.5 256v2M842.5 253v2M857.5 254v2M859.5 257v2M861.5 260v2M864.5 264v2M868.5 264v4M869.5 258v6M870.5 253v5M871.5 250v3M872.5 247v3M873.5 245v2M890.5 247v2M901.5 248v2M902.5 250v2M903.5 252v3M904.5 255v2M907.5 259v2M914.5 259v2M915.5 256v3M916.5 252v4M917.5 250v2M918.5 248v2M919.5 246v2M920.5 244v2M943.5 246v2M945.5 249v2M946.5 251v2M947.5 253v2M948.5 255v3M949.5 258v2M962.5 255v2M963.5 252v3M964.5 249v3M965.5 246v3M966.5 243v3M967.5 239v4M968.5 237v2M969.5 235v2M971.5 235v2M972.5 237v2M973.5 239v4M974.5 243v6M975.5 249v4M976.5 253v2M977.5 255v3M978.5 258v2M984.5 252v2M985.5 250v2M986.5 248v2M993.5 243v2M995.5 246v2M997.5 249v2M1009.5 247v2M1010.5 245v2M1011.5 242v3M1012.5 238v4M1013.5 233v5M1014.5 228v5M1015.5 224v4M1016.5 222v2M1017.5 220v2M1018.5 218v2M1019.5 216v2M1027.5 217v2M1033.5 216v2M1034.5 214v2M1035.5 212v2M1045.5 208v2M1046.5 210v2M1047.5 212v3M1048.5 215v3M1049.5 218v3M1050.5 221v2M1052.5 224v2M1064.5 224v2M1066.5 227v2M1067.5 229v2M1068.5 231v2M1092.5 238v2M1093.5 240v2M1094.5 242v2M1097.5 240v2M1098.5 238v2M1099.5 236v2M1100.5 234v2M1101.5 232v2M1103.5 229v2M1106.5 230v2M1108.5 233v2M1110.5 236v2M1115.5 236v2M1116.5 234v2M1117.5 232v2M1118.5 230v2M1137.5 232v2M1143.5 235v2M1144.5 237v2M691 120.5h2M693 121.5h2M695 122.5h1M697 125.5h1M698 126.5h1M669 164.5h1M715 166.5h1M667 167.5h1M716 167.5h1M717 168.5h1M718 169.5h1M665 170.5h1M664 171.5h1M663 172.5h1M662 173.5h1M661 174.5h1M778 193.5h1M776 196.5h1M765 202.5h2M1042 206.5h2M1040 207.5h2M1044 207.5h1M1039 208.5h1M507 209.5h1M1038 209.5h1M508 210.5h1M1037 210.5h1M1036 211.5h1M505 212.5h1M1022 213.5h1M1021 214.5h1M1023 214.5h2M1020 215.5h1M1025 215.5h1M1026 216.5h1M1030 218.5h3M1028 219.5h2M190 221.5h1M168 222.5h1M189 222.5h1M1062 222.5h1M169 223.5h2M1051 223.5h1M1060 223.5h2M1063 223.5h1M171 224.5h1M192 224.5h1M1059 224.5h1M187 225.5h1M1057 225.5h2M186 226.5h1M1053 226.5h1M1055 226.5h2M1065 226.5h1M1054 227.5h1M1123 227.5h1M1104 228.5h1M1121 228.5h2M1124 228.5h2M184 229.5h1M212 229.5h5M542 229.5h2M1105 229.5h1M1119 229.5h2M1126 229.5h2M211 230.5h1M217 230.5h1M540 230.5h2M544 230.5h4M1128 230.5h1M175 231.5h1M218 231.5h2M539 231.5h1M548 231.5h2M1102 231.5h1M1129 231.5h2M1138 231.5h1M176 232.5h1M182 232.5h1M220 232.5h1M538 232.5h1M550 232.5h3M616 232.5h1M1107 232.5h1M1131 232.5h1M1139 232.5h1M197 233.5h1M209 233.5h1M537 233.5h1M553 233.5h5M617 233.5h1M1069 233.5h1M1077 233.5h7M1132 233.5h1M1140 233.5h2M208 234.5h1M558 234.5h6M618 234.5h1M970 234.5h1M1070 234.5h2M1075 234.5h2M1084 234.5h3M1133 234.5h2M1136 234.5h1M1142 234.5h1M178 235.5h1M180 235.5h1M207 235.5h1M564 235.5h5M1072 235.5h3M1087 235.5h2M1109 235.5h1M1135 235.5h1M179 236.5h1M199 236.5h1M206 236.5h1M256 236.5h1M535 236.5h1M569 236.5h3M736 236.5h1M797 236.5h1M1089 236.5h2M200 237.5h1M205 237.5h1M255 237.5h1M496 237.5h1M534 237.5h1M572 237.5h2M737 237.5h2M798 237.5h1M1091 237.5h1M1113 237.5h2M201 238.5h2M204 238.5h1M254 238.5h1M533 238.5h1M574 238.5h2M739 238.5h1M1111 238.5h2M203 239.5h1M253 239.5h1M576 239.5h2M621 239.5h1M740 239.5h1M795 239.5h1M1145 239.5h3M252 240.5h1M494 240.5h1M578 240.5h2M800 240.5h1M1148 240.5h9M234 241.5h1M493 241.5h1M580 241.5h1M790 241.5h1M801 241.5h1M924 241.5h1M1157 241.5h2M1212 241.5h12M235 242.5h1M581 242.5h2M623 242.5h1M742 242.5h1M802 242.5h1M922 242.5h2M925 242.5h1M992 242.5h1M1095 242.5h2M1159 242.5h2M1200 242.5h12M1224 242.5h10M236 243.5h1M583 243.5h1M594 243.5h2M743 243.5h1M803 243.5h1M921 243.5h1M926 243.5h2M932 243.5h7M991 243.5h1M1161 243.5h6M1177 243.5h23M1234 243.5h6M237 244.5h1M491 244.5h1M584 244.5h1M593 244.5h1M596 244.5h2M792 244.5h1M804 244.5h1M928 244.5h1M930 244.5h2M939 244.5h2M990 244.5h1M1167 244.5h10M489 245.5h2M592 245.5h1M598 245.5h1M625 245.5h1M805 245.5h1M874 245.5h1M892 245.5h6M929 245.5h1M941 245.5h2M989 245.5h1M994 245.5h1M487 246.5h2M591 246.5h1M599 246.5h2M806 246.5h1M875 246.5h2M891 246.5h1M898 246.5h1M988 246.5h1M1005 246.5h1M239 247.5h1M248 247.5h1M486 247.5h1M586 247.5h1M589 247.5h2M601 247.5h1M608 247.5h1M807 247.5h1M877 247.5h2M899 247.5h2M987 247.5h1M1003 247.5h2M1006 247.5h2M228 248.5h2M240 248.5h1M247 248.5h1M587 248.5h2M602 248.5h1M746 248.5h1M808 248.5h1M847 248.5h1M879 248.5h2M944 248.5h1M996 248.5h1M1002 248.5h1M1008 248.5h1M241 249.5h1M246 249.5h1M603 249.5h2M809 249.5h2M846 249.5h1M848 249.5h1M881 249.5h4M889 249.5h1M1000 249.5h2M242 250.5h2M245 250.5h1M484 250.5h1M605 250.5h2M811 250.5h3M845 250.5h1M849 250.5h2M885 250.5h4M999 250.5h1M244 251.5h1M273 251.5h1M483 251.5h1M814 251.5h2M844 251.5h1M851 251.5h2M998 251.5h1M271 252.5h2M274 252.5h2M816 252.5h2M843 252.5h1M853 252.5h2M269 253.5h2M276 253.5h2M525 253.5h1M749 253.5h1M818 253.5h2M855 253.5h2M268 254.5h1M524 254.5h1M630 254.5h1M820 254.5h2M958 254.5h1M983 254.5h1M262 255.5h1M631 255.5h2M634 255.5h1M822 255.5h1M841 255.5h1M957 255.5h1M959 255.5h2M982 255.5h1M633 256.5h1M823 256.5h1M858 256.5h1M956 256.5h1M961 256.5h1M981 256.5h1M519 257.5h2M522 257.5h1M824 257.5h1M905 257.5h1M955 257.5h1M980 257.5h1M264 258.5h1M521 258.5h1M825 258.5h1M906 258.5h1M954 258.5h1M979 258.5h1M265 259.5h1M826 259.5h1M860 259.5h1M950 259.5h1M953 259.5h1M281 260.5h1M379 260.5h3M827 260.5h1M951 260.5h2M282 261.5h1M369 261.5h1M377 261.5h2M382 261.5h3M828 261.5h1M908 261.5h1M912 261.5h2M283 262.5h1M376 262.5h1M385 262.5h1M829 262.5h1M837 262.5h1M862 262.5h1M909 262.5h1M911 262.5h1M284 263.5h1M303 263.5h1M375 263.5h1M830 263.5h1M836 263.5h1M863 263.5h1M910 263.5h1M285 264.5h1M301 264.5h2M304 264.5h1M374 264.5h1M831 264.5h2M835 264.5h1M286 265.5h1M300 265.5h1M305 265.5h1M373 265.5h1M387 265.5h1M833 265.5h2M287 266.5h2M298 266.5h2M306 266.5h1M372 266.5h1M388 266.5h1M865 266.5h2M289 267.5h4M296 267.5h2M389 267.5h2M867 267.5h1M293 268.5h3M391 268.5h2M393 269.5h2M309 271.5h1M349 271.5h3M348 272.5h1M347 273.5h1M346 274.5h1M345 275.5h1M340 276.5h5M338 277.5h2M336 278.5h2M355 278.5h1M335 279.5h1M356 279.5h2M314 280.5h1M327 280.5h1M333 280.5h2M358 280.5h1M326 281.5h1M328 281.5h2M332 281.5h1M325 282.5h1M330 282.5h2M316 283.5h1M324 283.5h1M317 284.5h1M323 284.5h1M321 285.5h2M320 286.5h1M319 287.5h1M408 319.5h2M413 319.5h3M410 320.5h3M423 333.5h1M424 334.5h2M426 335.5h1M438 364.5h1M440 367.5h1M441 368.5h1M442 369.5h2"/>
<path stroke="#ff0000" d="M211.5 219v2M214.5 223v2M215.5 225v2M216.5 227v2M220.5 232v2M224.5 237v2M252.5 244v2M253.5 246v2M255.5 249v2M257.5 252v2M276.5 266v2M359.5 274v2M388.5 261v2M390.5 258v2M393.5 255v3M394.5 258v4M395.5 262v5M396.5 267v4M397.5 271v4M398.5 275v4M399.5 279v3M400.5 282v3M401.5 285v4M402.5 289v3M403.5 292v3M404.5 295v4M405.5 299v4M406.5 303v4M407.5 307v4M408.5 311v3M409.5 314v3M410.5 317v3M411.5 320v3M412.5 323v3M413.5 326v3M414.5 329v2M415.5 331v3M416.5 334v3M417.5 337v2M418.5 339v3M419.5 342v3M420.5 345v2M421.5 347v2M422.5 349v3M423.5 352v2M424.5 354v2M425.5 356v2M427.5 359v2M429.5 362v2M443.5 373v2M444.5 369v4M445.5 365v4M446.5 362v3M447.5 359v3M448.5 355v4M449.5 352v3M450.5 349v3M451.5 345v4M452.5 342v3M453.5 338v4M454.5 335v3M455.5 331v4M456.5 328v3M457.5 324v4M458.5 321v3M459.5 318v3M460.5 315v3M461.5 311v4M462.5 308v3M463.5 305v3M464.5 302v3M465.5 299v3M466.5 296v3M467.5 294v2M468.5 291v3M469.5 288v3M470.5 285v3M471.5 281v4M472.5 277v4M473.5 273v4M474.5 269v4M475.5 266v3M476.5 262v4M477.5 259v3M478.5 256v3M479.5 253v3M480.5 250v3M481.5 248v2M488.5 241v2M489.5 239v2M490.5 237v2M492.5 234v2M502.5 228v2M503.5 230v2M504.5 232v2M505.5 234v2M506.5 236v4M507.5 240v4M508.5 244v2M511.5 248v2M516.5 247v2M517.5 245v2M518.5 242v3M519.5 240v2M520.5 238v2M521.5 236v2M522.5 234v2M523.5 232v2M524.5 230v2M611.5 232v2M613.5 235v2M614.5 237v2M615.5 239v4M616.5 243v4M617.5 247v3M618.5 250v3M619.5 253v3M620.5 256v2M621.5 258v2M624.5 262v2M634.5 260v2M635.5 257v3M636.5 255v2M637.5 253v2M638.5 250v3M639.5 246v4M640.5 242v4M641.5 239v3M642.5 235v4M643.5 232v3M644.5 228v4M645.5 224v4M646.5 220v4M647.5 216v4M648.5 212v4M649.5 208v4M650.5 204v4M651.5 200v4M652.5 196v4M653.5 192v4M654.5 188v4M655.5 184v4M656.5 181v3M657.5 178v3M658.5 174v4M659.5 171v3M660.5 167v4M661.5 164v3M662.5 160v4M663.5 157v3M664.5 155v2M665.5 152v3M666.5 149v3M667.5 147v2M668.5 144v3M669.5 141v3M670.5 138v3M671.5 135v3M672.5 132v3M673.5 130v2M674.5 127v3M675.5 125v2M676.5 123v2M677.5 121v2M678.5 119v2M679.5 117v2M680.5 115v2M683.5 111v2M695.5 109v2M696.5 111v2M697.5 113v2M698.5 115v3M699.5 118v2M700.5 120v3M701.5 123v3M702.5 126v3M703.5 129v4M704.5 133v3M705.5 136v3M706.5 139v3M707.5 142v2M708.5 144v3M709.5 147v3M710.5 150v3M711.5 153v4M712.5 157v4M713.5 161v4M714.5 165v4M715.5 169v3M716.5 172v3M717.5 175v4M718.5 179v3M719.5 182v4M720.5 186v4M721.5 190v4M722.5 194v4M723.5 198v5M724.5 203v5M725.5 208v6M726.5 214v4M727.5 218v4M728.5 222v4M729.5 226v4M730.5 230v4M731.5 234v2M732.5 236v2M733.5 238v3M734.5 241v2M735.5 243v3M736.5 246v2M737.5 248v2M738.5 250v2M739.5 252v2M744.5 258v2M745.5 260v2M748.5 259v2M750.5 256v2M751.5 254v2M752.5 252v2M754.5 249v2M755.5 247v2M756.5 244v3M757.5 242v2M758.5 240v2M759.5 238v2M760.5 236v2M761.5 234v2M762.5 232v2M763.5 230v2M765.5 227v2M766.5 225v2M767.5 223v2M768.5 220v3M769.5 218v2M770.5 216v2M771.5 213v3M772.5 211v2M773.5 208v3M774.5 205v3M775.5 202v3M776.5 200v2M777.5 198v2M778.5 197v2M779.5 199v4M780.5 203v5M781.5 208v4M782.5 212v4M783.5 216v4M784.5 220v3M785.5 223v4M786.5 227v2M787.5 229v2M788.5 231v2M789.5 233v2M797.5 238v2M798.5 240v4M799.5 244v2M800.5 246v2M801.5 248v2M802.5 250v2M803.5 252v2M806.5 256v2M808.5 259v2M811.5 263v2M865.5 263v2M866.5 260v3M867.5 256v4M868.5 253v3M869.5 249v4M870.5 247v2M904.5 255v2M906.5 252v2M908.5 249v2M909.5 247v2M910.5 245v2M911.5 243v2M912.5 241v2M914.5 238v2M915.5 236v2M922.5 235v2M927.5 241v2M949.5 250v2M953.5 245v2M966.5 243v2M967.5 245v2M969.5 248v2M970.5 250v2M971.5 252v2M976.5 255v2M977.5 253v2M978.5 251v2M979.5 249v2M981.5 246v2M982.5 244v2M984.5 241v2M985.5 239v2M986.5 237v2M996.5 230v2M997.5 228v2M998.5 226v2M999.5 224v2M1000.5 222v2M1001.5 220v2M1004.5 216v2M1006.5 213v2M1007.5 211v2M1008.5 209v2M1019.5 208v2M1020.5 210v2M1021.5 212v2M1038.5 225v2M1040.5 228v2M1041.5 230v2M1042.5 232v2M1043.5 234v2M1044.5 236v2M1045.5 238v2M1047.5 241v2M688 107.5h4M686 108.5h2M692 108.5h3M685 109.5h1M684 110.5h1M682 113.5h1M681 114.5h1M1013 205.5h2M1011 206.5h2M1015 206.5h2M1010 207.5h1M1017 207.5h2M1009 208.5h1M182 212.5h6M180 213.5h2M188 213.5h1M179 214.5h1M189 214.5h1M1022 214.5h1M178 215.5h1M190 215.5h1M1005 215.5h1M1023 215.5h1M177 216.5h1M191 216.5h1M1024 216.5h1M175 217.5h2M192 217.5h1M206 217.5h4M1025 217.5h1M174 218.5h1M193 218.5h1M204 218.5h2M210 218.5h1M1003 218.5h1M1026 218.5h1M171 219.5h3M194 219.5h1M202 219.5h2M1002 219.5h1M1027 219.5h1M168 220.5h3M195 220.5h2M200 220.5h2M1028 220.5h2M197 221.5h3M212 221.5h1M1030 221.5h3M213 222.5h1M1033 222.5h3M533 223.5h6M1036 223.5h1M530 224.5h3M539 224.5h3M1037 224.5h1M529 225.5h1M542 225.5h1M528 226.5h1M543 226.5h2M500 227.5h2M527 227.5h1M545 227.5h1M1039 227.5h1M498 228.5h2M526 228.5h1M546 228.5h2M217 229.5h1M497 229.5h1M525 229.5h1M548 229.5h2M764 229.5h1M1099 229.5h6M218 230.5h1M496 230.5h1M550 230.5h3M1097 230.5h2M1105 230.5h1M1116 230.5h2M219 231.5h1M495 231.5h1M553 231.5h3M608 231.5h3M994 231.5h2M1095 231.5h2M1106 231.5h1M1114 231.5h2M1118 231.5h2M494 232.5h1M556 232.5h2M605 232.5h3M992 232.5h2M1094 232.5h1M1107 232.5h1M1111 232.5h3M1120 232.5h2M493 233.5h1M558 233.5h3M603 233.5h2M919 233.5h2M991 233.5h1M1092 233.5h2M1108 233.5h3M1122 233.5h1M221 234.5h1M561 234.5h2M601 234.5h2M612 234.5h1M790 234.5h1M917 234.5h2M921 234.5h1M989 234.5h2M1091 234.5h1M1123 234.5h2M1171 234.5h20M222 235.5h1M563 235.5h4M599 235.5h2M791 235.5h3M916 235.5h1M988 235.5h1M1089 235.5h2M1125 235.5h1M1167 235.5h4M1191 235.5h4M223 236.5h1M491 236.5h1M567 236.5h4M597 236.5h2M794 236.5h1M987 236.5h1M1085 236.5h4M1126 236.5h1M1165 236.5h2M1195 236.5h5M228 237.5h5M571 237.5h4M593 237.5h4M795 237.5h2M923 237.5h1M1080 237.5h5M1127 237.5h2M1163 237.5h2M1200 237.5h4M226 238.5h2M233 238.5h1M575 238.5h4M589 238.5h4M924 238.5h1M1078 238.5h2M1129 238.5h1M1160 238.5h3M1204 238.5h5M225 239.5h1M234 239.5h1M579 239.5h10M925 239.5h1M1076 239.5h2M1130 239.5h2M1157 239.5h3M1209 239.5h4M235 240.5h1M247 240.5h2M913 240.5h1M926 240.5h1M960 240.5h2M1046 240.5h1M1075 240.5h1M1132 240.5h6M1154 240.5h3M1213 240.5h6M1234 240.5h6M236 241.5h1M245 241.5h2M249 241.5h1M958 241.5h2M962 241.5h2M1073 241.5h2M1138 241.5h2M1151 241.5h3M1219 241.5h15M237 242.5h2M242 242.5h3M250 242.5h1M956 242.5h2M964 242.5h2M1058 242.5h3M1072 242.5h1M1140 242.5h2M1146 242.5h5M239 243.5h3M251 243.5h1M487 243.5h1M928 243.5h1M955 243.5h1M983 243.5h1M1048 243.5h3M1055 243.5h3M1061 243.5h5M1070 243.5h2M1142 243.5h4M486 244.5h1M875 244.5h1M929 244.5h1M954 244.5h1M1051 244.5h4M1066 244.5h4M484 245.5h2M873 245.5h2M876 245.5h1M930 245.5h2M483 246.5h1M509 246.5h1M871 246.5h2M877 246.5h1M932 246.5h1M482 247.5h1M510 247.5h1M878 247.5h1M933 247.5h2M952 247.5h1M968 247.5h1M254 248.5h1M879 248.5h1M935 248.5h1M951 248.5h1M980 248.5h1M515 249.5h1M880 249.5h2M936 249.5h1M950 249.5h1M512 250.5h1M514 250.5h1M882 250.5h1M937 250.5h2M256 251.5h1M513 251.5h1M753 251.5h1M883 251.5h2M907 251.5h1M939 251.5h1M885 252.5h2M940 252.5h2M948 252.5h1M887 253.5h3M942 253.5h3M947 253.5h1M258 254.5h1M740 254.5h1M804 254.5h1M890 254.5h8M905 254.5h1M945 254.5h2M972 254.5h1M259 255.5h1M741 255.5h1M805 255.5h1M898 255.5h2M973 255.5h1M260 256.5h1M392 256.5h1M742 256.5h1M900 256.5h2M974 256.5h1M261 257.5h1M391 257.5h1M743 257.5h1M902 257.5h2M975 257.5h1M262 258.5h7M749 258.5h1M807 258.5h1M269 259.5h1M270 260.5h1M389 260.5h1M622 260.5h1M271 261.5h1M623 261.5h1M747 261.5h1M809 261.5h1M842 261.5h2M272 262.5h1M633 262.5h1M746 262.5h1M810 262.5h1M840 262.5h2M844 262.5h1M273 263.5h1M385 263.5h3M631 263.5h2M838 263.5h2M845 263.5h2M274 264.5h1M379 264.5h6M625 264.5h2M630 264.5h1M837 264.5h1M847 264.5h1M275 265.5h1M375 265.5h4M627 265.5h3M812 265.5h1M836 265.5h1M848 265.5h1M864 265.5h1M373 266.5h2M813 266.5h1M835 266.5h1M849 266.5h2M862 266.5h2M366 267.5h7M814 267.5h1M834 267.5h1M851 267.5h2M861 267.5h1M277 268.5h1M365 268.5h1M815 268.5h1M833 268.5h1M853 268.5h2M858 268.5h3M278 269.5h1M364 269.5h1M816 269.5h2M832 269.5h1M855 269.5h3M279 270.5h1M363 270.5h1M818 270.5h1M831 270.5h1M280 271.5h1M362 271.5h1M819 271.5h2M829 271.5h2M281 272.5h2M361 272.5h1M821 272.5h3M827 272.5h2M283 273.5h1M360 273.5h1M824 273.5h3M284 274.5h2M286 275.5h4M290 276.5h11M358 276.5h1M301 277.5h2M325 277.5h5M357 277.5h1M303 278.5h2M321 278.5h4M330 278.5h5M353 278.5h4M305 279.5h3M318 279.5h3M335 279.5h2M347 279.5h6M308 280.5h3M314 280.5h4M337 280.5h10M311 281.5h3M426 358.5h1M428 361.5h1M430 364.5h1M431 365.5h1M432 366.5h1M433 367.5h1M434 368.5h1M435 369.5h1M436 370.5h1M437 371.5h2M439 372.5h2M441 373.5h2"/>
</g>
<path d="M125.5 414V420M169.5 411V417M169.5 102V105M213.5 411V417M213.5 102V105M257.5 411V417M257.5 102V105M301.5 411V417M301.5 102V105M344.5 407V420M344.5 102V108M388.5 411V417M388.5 102V105M432.5 411V417M432.5 102V105M476.5 411V417M476.5 102V105M520.5 411V417M520.5 102V105M564.5 407V420M564.5 102V108M608.5 411V417M608.5 102V105M652.5 411V417M652.5 102V105M696.5 411V417M696.5 102V105M739.5 411V417M739.5 102V105M783.5 407V420M783.5 102V108M827.5 411V417M827.5 102V105M871.5 411V417M871.5 102V105M915.5 411V417M915.5 102V105M959.5 411V417M959.5 102V105M1003.5 407V420M1003.5 102V108M1047.5 411V417M1047.5 102V105M1091.5 411V417M1091.5 102V105M1135.5 411V417M1135.5 102V105M1178.5 411V417M1178.5 102V105M1222.5 407V420M1222.5 102V108M122 105.5H129M122 119.5H129M119 133.5H132M122 147.5H129M122 161.5H129M122 175.5H129M119 189.5H132M122 203.5H129M122 217.5H129M122 231.5H129M119 245.5H132M122 259.5H129M122 273.5H129M122 287.5H129M119 301.5H132M122 315.5H129M122 329.5H129M122 343.5H129M119 357.5H132M122 371.5H129M122 385.5H129M122 399.5H129M119 413.5H125" stroke="#fff" stroke-width="1" fill="none" shape-rendering="crispEdges"/>
<rect x="125.5" y="101.5" width="1139" height="312" fill="none" stroke="#000"/>
<rect x="125.5" y="76.5" width="524" height="17" fill="#858483" stroke="#000"/>
<line x1="129" y1="84.5" x2="164" y2="84.5" stroke="#ff0000" shape-rendering="crispEdges"/>
<text x="174" y="89" font-size="14.3" fill="#fff">DVelX</text>
<line x1="260" y1="84.5" x2="295" y2="84.5" stroke="#008000" shape-rendering="crispEdges"/>
<text x="305" y="89" font-size="14.3" fill="#fff">VelX</text>
<line x1="391" y1="84.5" x2="426" y2="84.5" stroke="#0000ff" shape-rendering="crispEdges"/>
<text x="436" y="89" font-size="14.3" fill="#fff">DVelY</text>
<line x1="522" y1="84.5" x2="557" y2="84.5" stroke="#ffc0cb" shape-rendering="crispEdges"/>
<text x="567" y="89" font-size="14.3" fill="#fff">VelY</text>
<text x="650.5" y="61" font-size="19.5" font-weight="bold" fill="#fff" text-anchor="middle">Value Graph</text>
<text x="99.0" y="139" font-size="16" fill="#ff0000" text-anchor="end">400</text>
<text x="99.0" y="195" font-size="16" fill="#ff0000" text-anchor="end">200</text>
<text x="108.2" y="251" font-size="16" fill="#ff0000" text-anchor="end">0</text>
<text x="95.0" y="307" font-size="16" fill="#ff0000" text-anchor="end">-200</text>
<text x="95.0" y="363" font-size="16" fill="#ff0000" text-anchor="end">-400</text>
<text x="95.0" y="419" font-size="16" fill="#ff0000" text-anchor="end">-600</text>
<text x="125.5" y="440" font-size="16" fill="#fff" text-anchor="middle">0</text>
<text x="344.5" y="440" font-size="16" fill="#fff" text-anchor="middle">5</text>
<text x="564.5" y="440" font-size="16" fill="#fff" text-anchor="middle">10</text>
<text x="783.5" y="440" font-size="16" fill="#fff" text-anchor="middle">15</text>
<text x="1003.5" y="440" font-size="16" fill="#fff" text-anchor="middle">20</text>
<text x="1222.5" y="440" font-size="16" fill="#fff" text-anchor="middle">25</text>
<text x="695" y="464" font-size="16" font-weight="bold" fill="#fff" text-anchor="middle">Line Number (10^3)</text>
<text transform="translate(34.2 256.5) rotate(-90)" font-size="15.7" font-weight="bold" fill="#ff0000" text-anchor="middle">Output</text>
<rect x="547.5" y="101.5" width="76" height="17" fill="#fff" stroke="#000"/>
<text x="585.5" y="114" font-size="14" fill="#000" text-anchor="middle">1 min</text>
<rect x="1040.5" y="101.5" width="76" height="17" fill="#fff" stroke="#000"/>
<text x="1078.5" y="114" font-size="14" fill="#000" text-anchor="middle">2 min</text>
<rect x="141.5" y="396.5" width="142" height="17" fill="#fff" stroke="#000"/>
<text x="211.7" y="409" font-size="14" fill="#000" text-anchor="middle">STABILIZE</text>
<rect x="166.5" y="413.5" width="72" height="17" fill="#fff" stroke="#000"/>
<text x="201.7" y="426" font-size="14" fill="#000" text-anchor="middle">AUTO</text>
<rect x="1240.5" y="396.5" width="60" height="17" fill="#fff" stroke="#000"/>
<text x="1276" y="409" font-size="14" fill="#000" text-anchor="start">STABILIZE</text>
<g font-size="19">
<text x="694" y="332" fill="#22b14c" textLength="182.6">Actual Velocity (VelX)</text><text x="880.6" y="332" fill="#fff200" textLength="80.6">tracks the</text>
<text x="694" y="354" fill="#ed1c24" textLength="210.6" lengthAdjust="spacing">Desired Velocity (DVelX)</text><text x="910.4" y="354" fill="#fff200">well</text>
<text x="694" y="376" fill="#fff200">similarly</text><text x="767" y="376" fill="#ffaec9" textLength="36.5">VelY</text><text x="811" y="376" fill="#fff200" textLength="49">tracks</text><text x="866.8" y="376" fill="#00a2e8" textLength="52.5">DVelY</text>
</g>
</svg>
</body></html>
